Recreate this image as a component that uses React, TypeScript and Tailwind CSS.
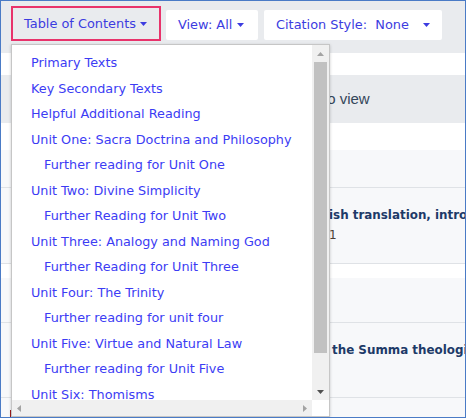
import React from "react";

const items: { label: string; sub?: boolean }[] = [
  { label: "Primary Texts" },
  { label: "Key Secondary Texts" },
  { label: "Helpful Additional Reading" },
  { label: "Unit One: Sacra Doctrina and Philosophy" },
  { label: "Further reading for Unit One", sub: true },
  { label: "Unit Two: Divine Simplicity" },
  { label: "Further Reading for Unit Two", sub: true },
  { label: "Unit Three: Analogy and Naming God" },
  { label: "Further Reading for Unit Three", sub: true },
  { label: "Unit Four: The Trinity" },
  { label: "Further reading for unit four", sub: true },
  { label: "Unit Five: Virtue and Natural Law" },
  { label: "Further reading for Unit Five", sub: true },
  { label: "Unit Six: Thomisms" },
  { label: "Further reading for Unit Six", sub: true },
];

function Caret({ className = "" }: { className?: string }) {
  return (
    <svg width="7" height="4" viewBox="0 0 7 4" className={className}>
      <path d="M0 0 L7 0 L3.5 4 Z" fill="currentColor" />
    </svg>
  );
}

export default function App() {
  return (
    <div className="w-[467px] h-[419px] bg-white" style={{ fontFamily: '"DejaVu Sans", Verdana, sans-serif' }}>
      <div className="relative w-[466px] h-[418px] border border-[#4a7bc6] overflow-hidden bg-[#f7f8fa]">
        {/* toolbar */}
        <div className="h-[52px] bg-[#e9ebee] flex items-start pt-[5px] pl-[10px] text-[12.9px] text-[#3c3ce0]">
          <div className="h-[35px] w-[150px] border-2 border-[#e8336b] bg-[#e9ebee] flex items-center pl-[11px] gap-[4px]">
            <span>Table of Contents</span>
            <Caret />
          </div>
          <div className="ml-[5px] mt-[4px] h-[30px] w-[92px] bg-white rounded-[2px] flex items-center pl-[12px] gap-[5px]">
            <span>View: All</span>
            <Caret />
          </div>
          <div className="ml-[6px] mt-[4px] h-[30px] w-[178px] bg-white rounded-[2px] flex items-center pl-[12px]">
            <span className="whitespace-pre">Citation Style:  None</span>
            <Caret className="ml-[14px]" />
          </div>
        </div>

        {/* background content */}
        <div className="h-[22px] bg-white" />
        <div className="h-[48px] bg-[#e9ebee] flex items-center pl-[322px] text-[15px] text-[#34465a]" style={{ fontFamily: '"Liberation Sans", Arial, sans-serif' }}>
          to view
        </div>
        <div className="h-[27px] bg-white" />
        <div className="h-[38px] bg-[#f7f8fa] border-b border-[#dfe2e6]" />
        <div className="h-[76px] bg-[#f7f8fa] border-b border-[#dfe2e6] pl-[328px] pt-[19px] whitespace-nowrap">
          <div className="text-[11.9px] font-bold text-[#1d3a68] leading-[16px]">ish translation, introduction</div>
          <div className="text-[12px] text-[#4b3f35] leading-[16px] mt-[4px]">1</div>
        </div>
        <div className="h-[14px] bg-white" />
        <div className="h-[45px] bg-[#f7f8fa] border-b border-[#dfe2e6]" />
        <div className="h-[75px] bg-[#f7f8fa] border-b border-[#dfe2e6] pl-[331px] pt-[19px] whitespace-nowrap">
          <div className="text-[11.9px] font-bold text-[#1d3a68] leading-[16px]">the Summa theologiae</div>
        </div>

        {/* small red outline behind dropdown */}
        <div className="absolute left-[9px] top-[409px] w-[48px] h-[7px] border-l border-b border-[#a01c1c]" />

        {/* dropdown */}
        <div className="absolute left-[10px] top-[43px] w-[319px] h-[373px] border border-[#c6c6c6] bg-white shadow-[0_1px_3px_rgba(0,0,0,0.2)] flex flex-col">
          <div className="flex flex-1 min-h-0">
            <div className="flex-1 overflow-hidden pt-[5px] text-[12.8px] text-[#3c3cf4] whitespace-nowrap">
              {items.map((it) => (
                <div key={it.label} className={`h-[25.5px] leading-[25.5px] ${it.sub ? "pl-[32px]" : "pl-[19px]"}`}>
                  {it.label}
                </div>
              ))}
            </div>
            <div className="w-[17px] bg-[#f0f0f0] flex flex-col items-center">
              <div className="h-[17px] flex items-center justify-center text-[#a3a3a3]">
                <Caret className="rotate-180" />
              </div>
              <div className="w-[13px] h-[291px] bg-[#c1c1c1]" />
              <div className="flex-1" />
              <div className="h-[17px] flex items-center justify-center text-[#505050]">
                <Caret />
              </div>
            </div>
          </div>
          <div className="h-[16px] flex">
            <div className="flex-1 bg-[#f0f0f0] flex items-center justify-between px-[5px] text-[#a3a3a3]">
              <svg width="4" height="7" viewBox="0 0 4 7"><path d="M4 0 L4 7 L0 3.5 Z" fill="currentColor" /></svg>
              <svg width="4" height="7" viewBox="0 0 4 7"><path d="M0 0 L0 7 L4 3.5 Z" fill="currentColor" /></svg>
            </div>
            <div className="w-[17px] bg-white" />
          </div>
        </div>
      </div>
    </div>
  );
}
